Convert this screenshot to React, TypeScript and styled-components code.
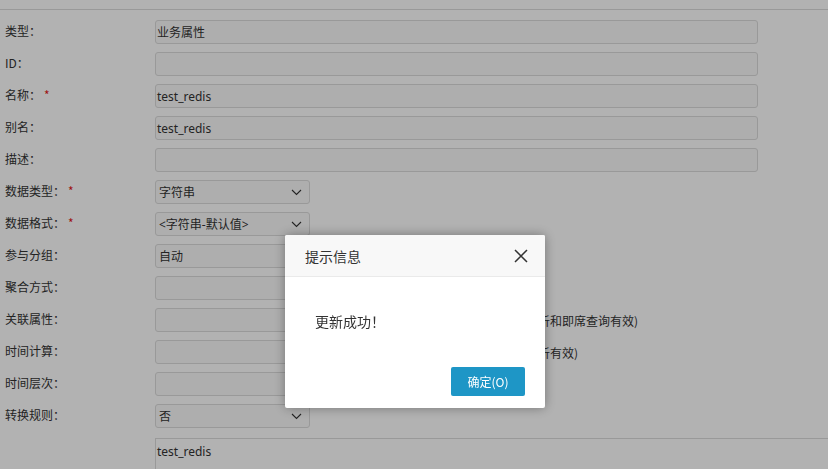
import React from "react";
import styled, { createGlobalStyle } from "styled-components";

const Global = createGlobalStyle`
  html, body { margin: 0; padding: 0; background: #fff; overflow: hidden; }
  body { font-family: "Noto Sans CJK SC", "Liberation Sans", sans-serif; font-size: 12px; color: #333; }
`;

const Page = styled.div`
  width: 828px;
  height: 469px;
  overflow: hidden;
  background: #fff;
`;

const TopBar = styled.div`
  height: 9px;
  border-bottom: 1px solid #dbdbdb;
`;

const Form = styled.div`
  display: flex;
  flex-direction: column;
  padding: 6px 0 0 5px;
`;

const Row = styled.div`
  display: flex;
  align-items: center;
  height: 32px;
`;

const Label = styled.div`
  width: 150px;
  flex: none;
  font-size: 12px;
  line-height: 14px;
  margin-top: -2px;
  color: #333;
  white-space: nowrap;
`;

const Star = styled.span`
  color: #e31b1b;
  margin-left: 3px;
`;

const Field = styled.div<{ $w: number }>`
  box-sizing: border-box;
  width: ${(p) => p.$w}px;
  height: 24px;
  border: 1px solid #dbdbdb;
  border-radius: 3px;
  background: #fafafa;
  display: flex;
  align-items: center;
  padding-left: 1px;
  font-family: "Noto Sans", "Noto Sans CJK SC", sans-serif;
  font-size: 12px;
  color: #333;
  flex: none;
`;

const SelectBox = styled(Field)`
  padding-left: 3px;
  justify-content: space-between;
  padding-right: 7px;
`;

const Hint = styled.span`
  margin-left: 9px;
  font-size: 12px;
  color: #333;
  white-space: nowrap;
`;

const TextArea = styled.div`
  box-sizing: border-box;
  margin: 6px 0 0 150px;
  width: 700px;
  height: 60px;
  border: 1px solid #dbdbdb;
  border-right: none;
  background: #fff;
  padding: 4px 1px;
  font-family: "Noto Sans", sans-serif;
  font-size: 12px;
  color: #333;
`;

const Overlay = styled.div`
  position: fixed;
  inset: 0;
  background: rgba(0, 0, 0, 0.3);
`;

const Dialog = styled.div`
  position: fixed;
  left: 285px;
  top: 235px;
  width: 260px;
  height: 173px;
  background: #fff;
  border-radius: 2px;
  box-shadow: 0 0 12px rgba(0, 0, 0, 0.35);
  display: flex;
  flex-direction: column;
`;

const DialogHeader = styled.div`
  height: 42px;
  box-sizing: border-box;
  background: #f8f8f8;
  border-bottom: 1px solid #eaeaea;
  border-radius: 2px 2px 0 0;
  display: flex;
  align-items: center;
  justify-content: space-between;
  padding: 0 17px 0 20px;
  font-size: 14px;
  color: #333;
`;

const CloseBtn = styled.button`
  border: none;
  background: none;
  padding: 0;
  width: 14px;
  height: 14px;
  display: flex;
  cursor: pointer;
`;

const DialogBody = styled.div`
  flex: 1;
  padding: 34px 30px 0 30px;
  font-size: 14px;
  color: #333;
`;

const DialogFooter = styled.div`
  display: flex;
  justify-content: flex-end;
  padding: 0 20px 12px 0;
`;

const OkButton = styled.button`
  width: 74px;
  height: 29px;
  border: none;
  border-radius: 2px;
  background: #1e96c6;
  color: #fff;
  font-family: "Noto Sans CJK SC", sans-serif;
  font-size: 12px;
  cursor: pointer;
`;

const Chevron = () => (
  <svg width="11" height="7" viewBox="0 0 11 7">
    <path d="M1 1 L5.5 5.5 L10 1" fill="none" stroke="#333" strokeWidth="1.1" />
  </svg>
);

type R = {
  label: string;
  req?: boolean;
  kind: "input" | "select";
  value?: string;
  w: number;
  hint?: string;
};

const rows: R[] = [
  { label: "类型：", kind: "input", value: "业务属性", w: 603 },
  { label: "ID：", kind: "input", value: "", w: 603 },
  { label: "名称：", req: true, kind: "input", value: "test_redis", w: 603 },
  { label: "别名：", kind: "input", value: "test_redis", w: 603 },
  { label: "描述：", kind: "input", value: "", w: 603 },
  { label: "数据类型：", req: true, kind: "select", value: "字符串", w: 155 },
  { label: "数据格式：", req: true, kind: "select", value: "<字符串-默认值>", w: 155 },
  { label: "参与分组：", kind: "select", value: "自动", w: 155 },
  { label: "聚合方式：", kind: "select", value: "", w: 155 },
  { label: "关联属性：", kind: "select", value: "", w: 310, hint: "(仅对透视分析和即席查询有效)" },
  { label: "时间计算：", kind: "select", value: "", w: 310, hint: "(仅对透视分析有效)" },
  { label: "时间层次：", kind: "select", value: "", w: 155 },
  { label: "转换规则：", kind: "select", value: "否", w: 155 },
];

export default function App() {
  return (
    <Page>
      <Global />
      <TopBar />
      <Form>
        {rows.map((r) => (
          <Row key={r.label}>
            <Label>
              {r.label}
              {r.req && <Star>*</Star>}
            </Label>
            {r.kind === "input" ? (
              <Field $w={r.w}>{r.value}</Field>
            ) : (
              <SelectBox $w={r.w}>
                <span>{r.value}</span>
                <Chevron />
              </SelectBox>
            )}
            {r.hint && <Hint>{r.hint}</Hint>}
          </Row>
        ))}
        <TextArea>test_redis</TextArea>
      </Form>
      <Overlay />
      <Dialog>
        <DialogHeader>
          <span>提示信息</span>
          <CloseBtn aria-label="关闭">
            <svg width="14" height="14" viewBox="0 0 14 14">
              <path d="M1 1 L13 13 M13 1 L1 13" stroke="#333" strokeWidth="1.5" fill="none" />
            </svg>
          </CloseBtn>
        </DialogHeader>
        <DialogBody>更新成功！</DialogBody>
        <DialogFooter>
          <OkButton>确定(O)</OkButton>
        </DialogFooter>
      </Dialog>
    </Page>
  );
}
